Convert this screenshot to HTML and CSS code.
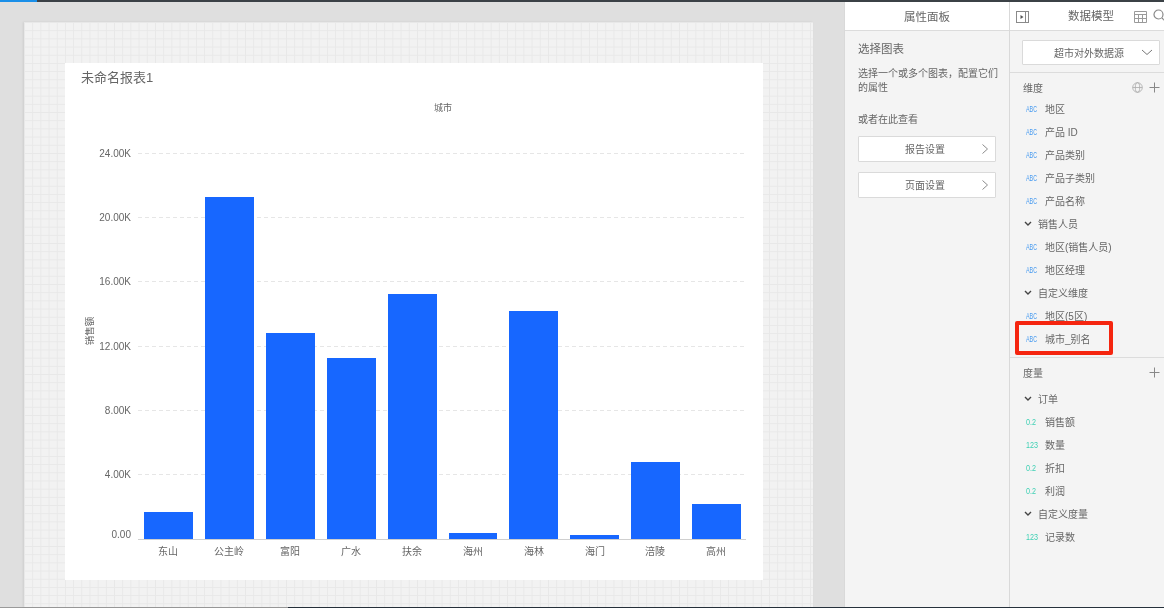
FILE: index.html
```html
<!DOCTYPE html>
<html lang="zh">
<head>
<meta charset="utf-8">
<title>未命名报表1</title>
<link rel="stylesheet" href="styles.css">
</head>
<body>
<div class="topbar"><div class="topbar-progress"></div></div>
<main class="app">
  <section class="stage">
    <div class="sheet">
      <div class="report">
        <h1 class="report-title">未命名报表1</h1>
        <svg class="chart" viewBox="65 63 698 517" width="698" height="517">
          <text class="legend" x="443" y="111" text-anchor="middle">城市</text>
          <text class="axis axis-y" transform="translate(93 331) rotate(-90)" text-anchor="middle">销售额</text>
          <g class="grid">
            <line x1="138" x2="746" y1="153.5" y2="153.5"/>
            <line x1="138" x2="746" y1="217.5" y2="217.5"/>
            <line x1="138" x2="746" y1="281.5" y2="281.5"/>
            <line x1="138" x2="746" y1="346.5" y2="346.5"/>
            <line x1="138" x2="746" y1="410.5" y2="410.5"/>
            <line x1="138" x2="746" y1="474.5" y2="474.5"/>
          </g>
          <g class="axis" text-anchor="end">
            <text x="131" y="157">24.00K</text>
            <text x="131" y="221">20.00K</text>
            <text x="131" y="285">16.00K</text>
            <text x="131" y="350">12.00K</text>
            <text x="131" y="414">8.00K</text>
            <text x="131" y="478">4.00K</text>
            <text x="131" y="538">0.00</text>
          </g>
          <g class="bars">
            <rect x="144" y="512" width="49" height="27"/>
            <rect x="205" y="197" width="49" height="342"/>
            <rect x="266" y="333" width="49" height="206"/>
            <rect x="327" y="358" width="49" height="181"/>
            <rect x="388" y="294" width="49" height="245"/>
            <rect x="449" y="533" width="48" height="6"/>
            <rect x="509" y="311" width="49" height="228"/>
            <rect x="570" y="535" width="49" height="4"/>
            <rect x="631" y="462" width="49" height="77"/>
            <rect x="692" y="504" width="49" height="35"/>
          </g>
          <line class="baseline" x1="138" x2="746" y1="539.5" y2="539.5"/>
          <g class="axis" text-anchor="middle">
            <text x="168" y="555">东山</text>
            <text x="229" y="555">公主岭</text>
            <text x="290" y="555">富阳</text>
            <text x="351" y="555">广水</text>
            <text x="412" y="555">扶余</text>
            <text x="473" y="555">海州</text>
            <text x="534" y="555">海林</text>
            <text x="595" y="555">海门</text>
            <text x="655" y="555">涪陵</text>
            <text x="716" y="555">高州</text>
          </g>
        </svg>
      </div>
    </div>
  </section>

  <aside class="props">
    <header class="panel-head">属性面板</header>
    <div class="props-body">
      <h2 class="props-title">选择图表</h2>
      <p class="props-text">选择一个或多个图表，配置它们的属性</p>
      <p class="props-alt">或者在此查看</p>
      <button class="setting-btn"><span>报告设置</span><svg class="chev-right" width="8" height="12" viewBox="0 0 8 12"><path d="M1.500 1.500 6.500 6 1.500 10.500"/></svg></button>
      <button class="setting-btn"><span>页面设置</span><svg class="chev-right" width="8" height="12" viewBox="0 0 8 12"><path d="M1.500 1.500 6.500 6 1.500 10.500"/></svg></button>
    </div>
  </aside>

  <aside class="model">
    <header class="panel-head model-head">
      <svg class="icon-collapse" width="14" height="14" viewBox="0 0 14 14"><rect x="0.500" y="1.500" width="12" height="11"/><path class="stroke" d="M9.500 1.500v11"/><path class="fill" d="M4.500 5 7.500 7 4.500 9z"/></svg>
      <span class="model-title">数据模型</span>
      <svg class="icon-table" width="13" height="13" viewBox="0 0 13 13"><path d="M.5 1.500h12v11H.5zM.5 4.500h12M.5 8.500h12M4.500 4.500v8M8.500 4.500v8"/></svg>
      <svg class="icon-search" width="13" height="13" viewBox="0 0 13 13"><circle cx="5.500" cy="5.500" r="4.500"/><path d="M9 9l3.500 3.500"/></svg>
    </header>
    <div class="source-wrap">
      <div class="source">
        <span>超市对外数据源</span>
        <svg width="12" height="7" viewBox="0 0 12 7"><path d="M1 1l5 4.500L11 1"/></svg>
      </div>
    </div>
    <div class="dims">
      <div class="sec-head"><span>维度</span>
        <svg class="icon-globe" width="11" height="11" viewBox="0 0 11 11"><circle cx="5.500" cy="5.500" r="4.800"/><ellipse cx="5.500" cy="5.500" rx="2.200" ry="4.800"/><path d="M.7 5.500h9.600"/></svg>
        <svg class="icon-plus" width="11" height="11" viewBox="0 0 11 11"><path d="M5.500.5v10M.5 5.500h10"/></svg>
      </div>
      <div class="item"><i class="tag abc">ABC</i>地区</div>
      <div class="item"><i class="tag abc">ABC</i>产品 ID</div>
      <div class="item"><i class="tag abc">ABC</i>产品类别</div>
      <div class="item"><i class="tag abc">ABC</i>产品子类别</div>
      <div class="item"><i class="tag abc">ABC</i>产品名称</div>
      <div class="group"><svg width="8" height="6" viewBox="0 0 8 6"><path d="M1 1l3 3 3-3"/></svg>销售人员</div>
      <div class="item"><i class="tag abc">ABC</i>地区(销售人员)</div>
      <div class="item"><i class="tag abc">ABC</i>地区经理</div>
      <div class="group"><svg width="8" height="6" viewBox="0 0 8 6"><path d="M1 1l3 3 3-3"/></svg>自定义维度</div>
      <div class="item"><i class="tag abc">ABC</i>地区(5区)</div>
      <div class="item"><i class="tag abc">ABC</i>城市_别名</div>
      <div class="highlight"></div>
    </div>
    <div class="measures">
      <div class="sec-head"><span>度量</span>
        <svg class="icon-plus" width="11" height="11" viewBox="0 0 11 11"><path d="M5.500.5v10M.5 5.500h10"/></svg>
      </div>
      <div class="group"><svg width="8" height="6" viewBox="0 0 8 6"><path d="M1 1l3 3 3-3"/></svg>订单</div>
      <div class="item"><i class="tag num">0.2</i>销售额</div>
      <div class="item"><i class="tag num">123</i>数量</div>
      <div class="item"><i class="tag num">0.2</i>折扣</div>
      <div class="item"><i class="tag num">0.2</i>利润</div>
      <div class="group"><svg width="8" height="6" viewBox="0 0 8 6"><path d="M1 1l3 3 3-3"/></svg>自定义度量</div>
      <div class="item"><i class="tag num">123</i>记录数</div>
    </div>
  </aside>
</main>
<div class="bottombar"></div>
</body>
</html>
```

FILE: styles.css
```css
* { box-sizing: border-box; }
html, body { margin: 0; height: 100%; overflow: hidden; }
body {
  width: 1164px;
  height: 608px;
  display: flex;
  flex-direction: column;
  background: #dfdfdf;
  color: #666;
  font-family: "Liberation Sans", "Noto Sans CJK SC", sans-serif;
}
.topbar { height: 2px; flex: none; background: #3b4146; }
.topbar-progress { width: 37px; height: 2px; background: #1a8fe8; }
.bottombar {
  height: 1px;
  flex: none;
  background: linear-gradient(90deg, #9a9a9a 288px, #26313b 288px);
}
.app { flex: 1; display: flex; min-height: 0; filter: blur(.3px); }

.stage {
  width: 844px;
  flex: none;
  padding: 20px 31px 0 24px;
  background: #dfdfdf;
}
.sheet {
  height: 100%;
  padding: 41px 50px 0 41px;
  background-color: #f2f2f2;
  background-image:
    linear-gradient(#e8e8e8 1px, transparent 1px),
    linear-gradient(90deg, #e8e8e8 1px, transparent 1px);
  background-size: 8.2px 8.2px;
  box-shadow: -1px 0 2px rgba(0, 0, 0, .08);
}
.report { position: relative; width: 698px; height: 517px; background: #fff; }
.report-title {
  position: absolute;
  left: 16px;
  top: 7px;
  margin: 0;
  font-size: 13px;
  line-height: 16px;
  font-weight: 400;
  color: #666;
}
.chart { display: block; }
.chart text { font-family: "Liberation Sans", "Noto Sans CJK SC", sans-serif; }
.legend { font-size: 9px; fill: #666; }
.axis { font-size: 10px; fill: #666; }
.axis-y { font-size: 9.500px; }
.grid line { stroke: #e6e6e6; stroke-width: 1; stroke-dasharray: 4 3; }
.bars rect { fill: #1767ff; }
.baseline { stroke: #cfcfcf; stroke-width: 1; }

.props, .model {
  flex: none;
  background: #f4f4f4;
  border-left: 1px solid #d9d9d9;
}
.props { width: 165px; }
.model { width: 155px; }
.panel-head {
  height: 29px;
  display: flex;
  align-items: center;
  justify-content: center;
  background: #fff;
  border-bottom: 1px solid #dcdcdc;
  font-size: 11.500px;
  color: #666;
}
.props-body { padding: 11px 13px 0 13px; }
.props-title { margin: 0; font-size: 11.500px; line-height: 14px; font-weight: 400; color: #666; }
.props-text { margin: 11px -4px 0 0; font-size: 10px; line-height: 13.500px; color: #666; }
.props-alt { margin: 19px 0 0; font-size: 10px; line-height: 13px; color: #666; }
.setting-btn {
  position: relative;
  display: block;
  width: 138px;
  height: 26px;
  margin: 10px 0 0;
  padding: 0;
  background: #fff;
  border: 1px solid #dadada;
  border-radius: 1px;
  font: 10px "Liberation Sans", "Noto Sans CJK SC", sans-serif;
  color: #666;
  text-align: center;
}
.setting-btn span { display: block; line-height: 26px; height: 24px; padding-right: 4px; }
.chev-right { position: absolute; right: 6px; top: 6px; }
.chev-right path { fill: none; stroke: #8c8c8c; stroke-width: 1; }

.model-head { position: relative; overflow: hidden; }
.model-title { position: absolute; left: 58px; top: 7px; line-height: 14px; }
.icon-collapse { position: absolute; left: 6px; top: 8px; }
.icon-collapse rect, .icon-collapse .stroke { fill: none; stroke: #8a8a8a; }
.icon-collapse .fill { fill: #555; }
.icon-table { position: absolute; left: 124px; top: 8px; }
.icon-table path { fill: none; stroke: #9a9a9a; }
.icon-search { position: absolute; left: 143px; top: 7px; }
.icon-search circle, .icon-search path { fill: none; stroke: #888; stroke-width: 1.200; }

.source-wrap { height: 42px; padding: 9px 4px 0 12px; border-bottom: 1px solid #dcdcdc; }
.source {
  height: 25px;
  display: flex;
  align-items: center;
  justify-content: space-between;
  padding: 0 6px 0 31px;
  background: #fff;
  border: 1px solid #dadada;
  border-radius: 1px;
  font-size: 10px;
  color: #666;
}
.source path { fill: none; stroke: #777; }

.dims { position: relative; height: 285px; padding-top: 5px; border-bottom: 1px solid #dcdcdc; }
.sec-head {
  height: 19px;
  display: flex;
  align-items: center;
  gap: 6px;
  padding: 0 4px 0 13px;
  font-size: 10px;
  color: #666;
}
.sec-head span { flex: 1; }
.icon-globe circle, .icon-globe ellipse, .icon-globe path { fill: none; stroke: #aaa; stroke-width: .8; }
.icon-plus path { fill: none; stroke: #888; }
.measures .sec-head { height: 29px; }
.item, .group {
  height: 23px;
  display: flex;
  align-items: center;
  font-size: 10px;
  white-space: nowrap;
  color: #666;
}
.item { padding-left: 16px; }
.group { padding-left: 14px; }
.group svg { margin-right: 6px; }
.group path { fill: none; stroke: #444; stroke-width: 1.400; }
.tag {
  width: 19px;
  flex: none;
  font-style: normal;
  font-size: 9px;
  line-height: 10px;
  transform-origin: left center;
}
.abc { color: #4a9cf0; transform: scaleX(.6); }
.num { color: #3fd0b4; transform: scaleX(.8); }
.highlight {
  position: absolute;
  left: 5px;
  top: 248px;
  width: 98px;
  height: 34px;
  border: 4px solid #f5250f;
  border-radius: 2px;
}
```
